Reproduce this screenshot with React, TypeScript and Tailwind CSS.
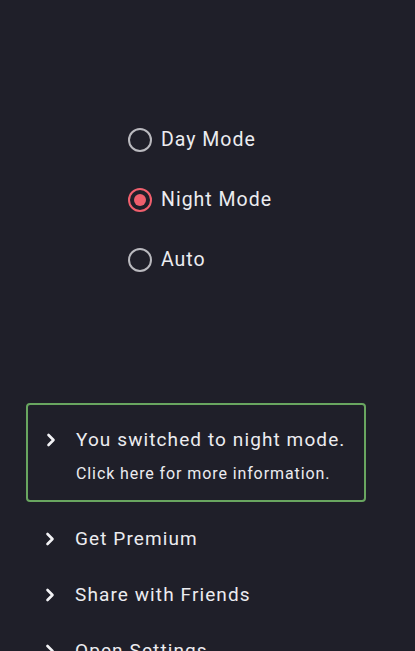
import { useState } from 'react'

const MODES = ['Day Mode', 'Night Mode', 'Auto']
const LINKS = ['Get Premium', 'Share with Friends', 'Open Settings']

function Chevron() {
  return (
    <svg width="10" height="14" viewBox="0 0 10 14" className="shrink-0">
      <path d="M2.5 2 L7.5 7 L2.5 12" fill="none" stroke="#f2f2f5" strokeWidth="2.6" strokeLinecap="round" strokeLinejoin="round" />
    </svg>
  )
}

function Radio({ checked }: { checked: boolean }) {
  if (checked) {
    return (
      <span className="w-[24px] h-[24px] rounded-full border-2 border-[#ef5f6d] flex items-center justify-center shrink-0">
        <span className="w-[12px] h-[12px] rounded-full bg-[#ef5f6d]" />
      </span>
    )
  }
  return <span className="w-[24px] h-[24px] rounded-full border-2 border-[#b9b9be] shrink-0" />
}

export default function App() {
  const [mode, setMode] = useState(1)

  return (
    <div
      className="w-[415px] h-[651px] overflow-hidden bg-[#1f1f29] text-[#ececf0]"
      style={{ fontFamily: 'Roboto, "Noto Sans", sans-serif' }}
    >
      {/* Theme selection */}
      <div className="pt-[120px] ml-[128px] flex flex-col gap-[20px]">
        {MODES.map((m, i) => (
          <button
            key={m}
            onClick={() => setMode(i)}
            className="h-[40px] flex items-center gap-[9px] text-[19.5px] tracking-[1px]"
          >
            <Radio checked={mode === i} />
            <span>{m}</span>
          </button>
        ))}
      </div>

      {/* Notice */}
      <div className="mt-[123px] ml-[26px] w-[340px] h-[99px] border-2 border-[#69a660] rounded-[4px] pl-[18px] pt-[23px]">
        <div className="flex items-center gap-[20px] h-[24px]">
          <Chevron />
          <span className="text-[19px] tracking-[1.1px]">You switched to night mode.</span>
        </div>
        <div className="ml-[30px] mt-[10px] text-[16px] tracking-[0.9px]">Click here for more information.</div>
      </div>

      {/* Links */}
      <div className="mt-[9px] ml-[45px] flex flex-col">
        {LINKS.map(l => (
          <div key={l} className="h-[56px] flex items-center gap-[20px]">
            <Chevron />
            <span className="text-[19px] tracking-[1.1px]">{l}</span>
          </div>
        ))}
      </div>
    </div>
  )
}
